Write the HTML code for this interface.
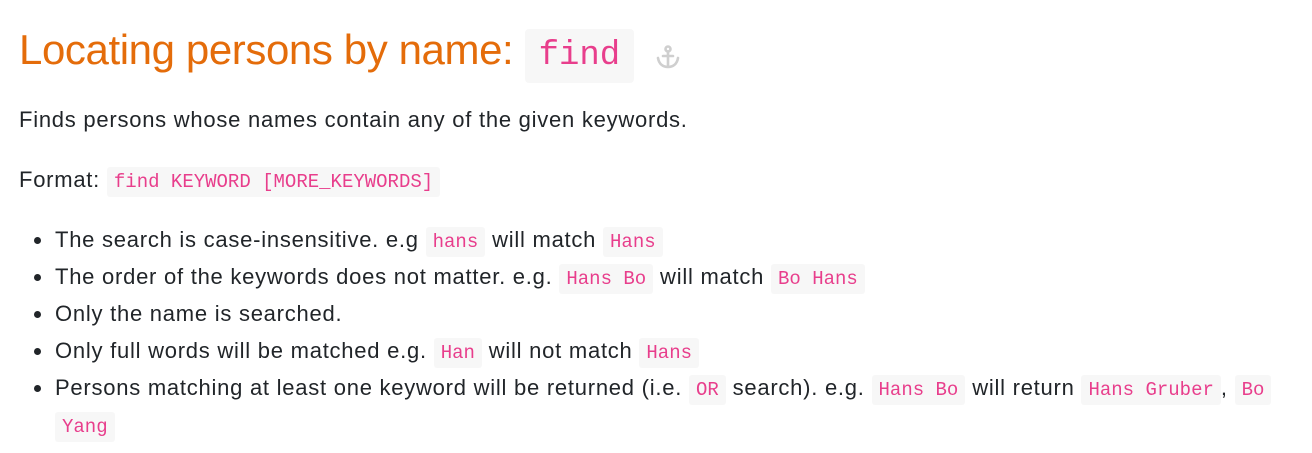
<!DOCTYPE html>
<html><head><style>
body{margin:0;background:#fff;font-family:"Liberation Sans",sans-serif;color:#212529;width:1312px;height:453px;overflow:hidden}
.w{position:absolute;left:19px;top:0;width:1272px}
h1{font-weight:normal;color:#e46c0a;font-size:42px;margin:0;position:absolute;top:26px;left:0;white-space:nowrap;letter-spacing:-0.4px}
h1 code{font-size:34px;padding:8px 14px;border-radius:4px;letter-spacing:0}
code{font-family:"Liberation Mono",monospace;color:#e83e8c;background:#f7f7f7;font-size:19px;padding:4px 7px;border-radius:3px;letter-spacing:0;line-height:1;-webkit-box-decoration-break:clone;box-decoration-break:clone}
p{margin:0;position:absolute;left:0;font-size:22px;white-space:nowrap;letter-spacing:0.75px}
ul{margin:0;padding:0;position:absolute;left:0;top:221px;list-style:none;font-size:22px;letter-spacing:0.75px;width:1272px}
li{position:relative;padding-left:36px;line-height:37px}
li:before{content:"";position:absolute;left:15px;top:16px;width:7px;height:7px;border-radius:50%;background:#212529}
.anc{position:absolute;left:636px;top:45px}
</style></head><body><div class="w">
<h1>Locating persons by name: <code>find</code></h1>
<svg class="anc" width="26" height="24" viewBox="0 0 26 24" fill="none" stroke="#cfcfcf" stroke-width="2.6" stroke-linecap="round"><circle cx="13" cy="4" r="2.5"/><path d="M13 7v15M8 11h10M3 13c1 6 5 9 10 9s9-3 10-9"/></svg>
<p style="top:107px">Finds persons whose names contain any of the given keywords.</p>
<p style="top:167px">Format: <code>find KEYWORD [MORE_KEYWORDS]</code></p>
<ul>
<li>The search is case-insensitive. e.g <code>hans</code> will match <code>Hans</code></li>
<li>The order of the keywords does not matter. e.g. <code>Hans Bo</code> will match <code>Bo Hans</code></li>
<li>Only the name is searched.</li>
<li>Only full words will be matched e.g. <code>Han</code> will not match <code>Hans</code></li>
<li>Persons matching at least one keyword will be returned (i.e. <code>OR</code> search). e.g. <code>Hans Bo</code> will return <code>Hans Gruber</code>, <code>Bo Yang</code></li>
</ul>
</div></body></html>
